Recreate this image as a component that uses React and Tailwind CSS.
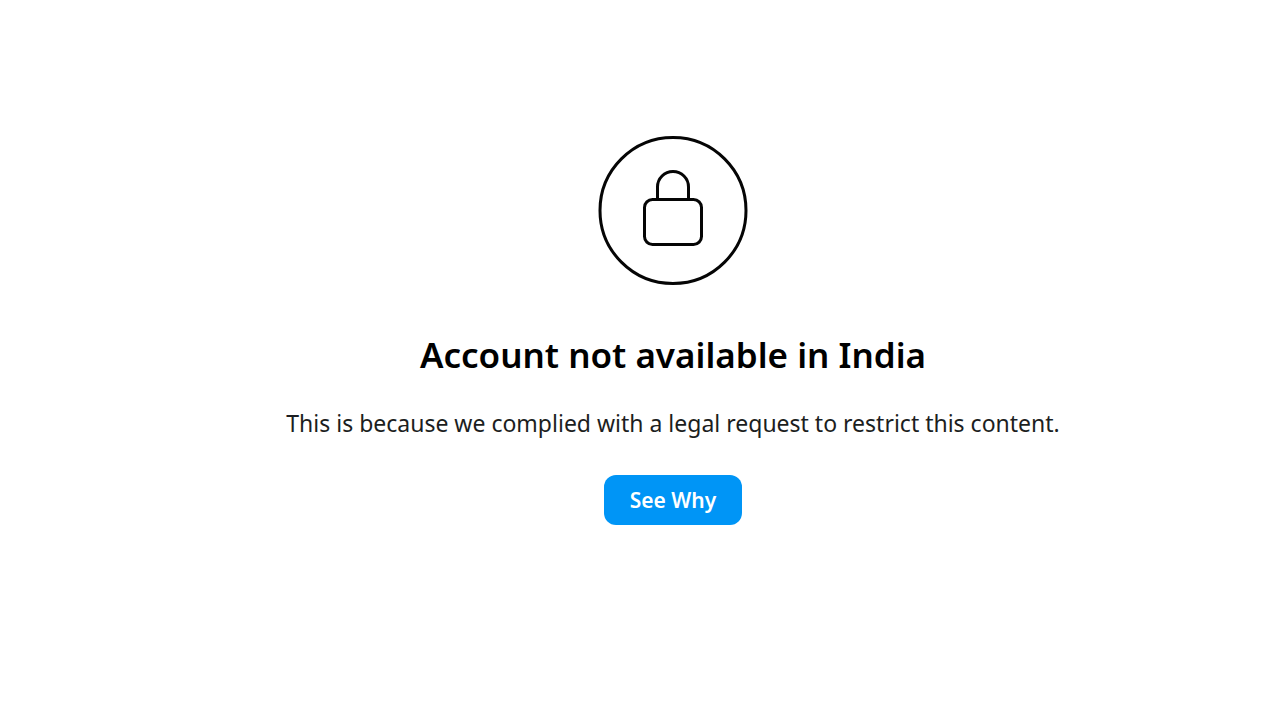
function LockIcon() {
  return (
    <svg viewBox="0 0 150 150" className="size-[150px]" fill="none" stroke="#050505" strokeWidth="3" aria-hidden="true">
      <circle cx="75" cy="74.5" r="73" />
      <path d="M59.5 63.5V51a15.5 15.5 0 0 1 31 0v12.5" />
      <rect x="46.5" y="63.5" width="57" height="45" rx="8" />
    </svg>
  )
}

export default function App() {
  return (
    <main className="flex min-h-screen flex-col items-center bg-white pt-[136px] pl-[66px] font-['Noto_Sans',sans-serif] text-[#1c1e21]">
      <LockIcon />
      <h1 className="mt-[47px] text-[35px] leading-[44px] font-semibold text-black">
        Account not available in India
      </h1>
      <p className="mt-[30px] text-[23px] leading-8">
        This is because we complied with a legal request to restrict this content.
      </p>
      <button
        type="button"
        className="mt-9 h-[50px] rounded-xl bg-[#0095f6] px-[26px] text-[21px] leading-6 font-semibold text-white"
      >
        See Why
      </button>
    </main>
  )
}
